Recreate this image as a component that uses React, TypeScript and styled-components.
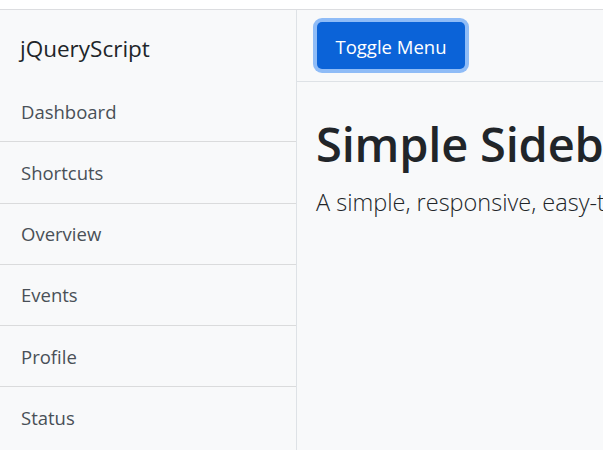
import React from "react";
import styled, { createGlobalStyle } from "styled-components";

const font = `"Open Sans", "Noto Sans", "Liberation Sans", sans-serif`;

const GlobalStyle = createGlobalStyle`
  html, body {
    margin: 0;
    padding: 0;
    background: #fff;
    overflow: hidden;
  }
  body {
    font-family: ${font};
    color: #212529;
  }
`;

const Wrapper = styled.div`
  display: flex;
  margin-top: 9px;
  border-top: 1px solid #dcdde0;
  height: 441px;
  background: #f8f9fa;
`;

const Sidebar = styled.aside`
  flex: 0 0 296px;
  border-right: 1px solid #dee2e6;
  background: #f8f9fa;
  display: flex;
  flex-direction: column;
`;

const SidebarHeading = styled.div`
  box-sizing: border-box;
  height: 71px;
  padding: 24px 20px 0;
  font-size: 22.5px;
  line-height: 30px;
  color: #212529;
`;

const NavList = styled.nav`
  display: flex;
  flex-direction: column;
`;

const NavItem = styled.a`
  box-sizing: border-box;
  height: 61.25px;
  display: flex;
  align-items: center;
  padding: 0 21px;
  font-size: 18.5px;
  color: #495057;
  text-decoration: none;
  border-bottom: 1px solid #dadbdc;

  &:last-child {
    border-bottom: 0;
  }
`;

const Page = styled.main`
  flex: 1;
  min-width: 0;
  display: flex;
  flex-direction: column;
  overflow: hidden;
`;

const TopBar = styled.div`
  box-sizing: border-box;
  height: 72px;
  padding: 12px 20px 0;
  border-bottom: 1px solid #dee2e6;
`;

const Button = styled.button`
  box-sizing: border-box;
  width: 148px;
  height: 47px;
  padding: 1px 15px 0;
  border: none;
  border-radius: 5px;
  background: #0b63d8;
  color: #fff;
  font-family: ${font};
  font-size: 18.5px;
  box-shadow: 0 0 0 4px #8fbcf7;
  cursor: pointer;
  white-space: nowrap;
`;

const Content = styled.div`
  padding: 32px 19px 0;
  white-space: nowrap;
`;

const Title = styled.h1`
  margin: 0 0 10px;
  font-size: 47px;
  line-height: 60px;
  font-weight: 600;
  color: #212529;
  letter-spacing: -0.2px;
`;

const Lead = styled.p`
  margin: 0;
  font-size: 23.5px;
  line-height: 37px;
  font-weight: 300;
  color: #212529;
`;

const items = ["Dashboard", "Shortcuts", "Overview", "Events", "Profile", "Status"];

export default function App() {
  return (
    <>
      <GlobalStyle />
      <Wrapper>
        <Sidebar>
          <SidebarHeading>jQueryScript</SidebarHeading>
          <NavList>
            {items.map((item) => (
              <NavItem key={item} href="#">
                {item}
              </NavItem>
            ))}
          </NavList>
        </Sidebar>
        <Page>
          <TopBar>
            <Button>Toggle Menu</Button>
          </TopBar>
          <Content>
            <Title>Simple Sidebar</Title>
            <Lead>A simple, responsive, easy-to-use sidebar template.</Lead>
          </Content>
        </Page>
      </Wrapper>
    </>
  );
}
